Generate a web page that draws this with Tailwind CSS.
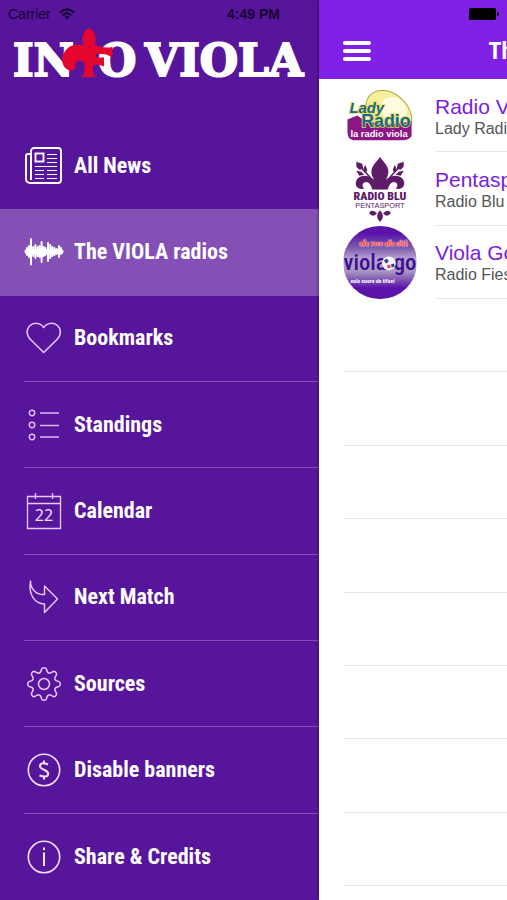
<!DOCTYPE html>
<html lang="en">

<head>
    <meta charset="UTF-8">
    <meta name="viewport" content="width=device-width, initial-scale=1.0">
    <title>Info Viola</title>
    <script src="https://cdn.jsdelivr.net/npm/@tailwindcss/browser@4"></script>
</head>

<body class="bg-[#57159c] font-['Liberation_Sans',sans-serif]">
<div class="relative flex min-h-screen w-full overflow-hidden">

    <!-- Status bar, stays over the menu and the page -->
    <div class="absolute inset-x-0 top-0 z-20 grid grid-cols-3 items-center px-2 pt-1 text-[#150330]">
        <div class="flex items-center gap-2 text-sm">
            Carrier
            <svg class="h-3 w-4" viewBox="0 0 16 12" fill="none" stroke="currentColor" stroke-width="2">
                <path d="M1 4.5Q8-1.8 15 4.5M3.8 7.2Q8 3.2 12.2 7.2" />
                <path d="M5.6 8.8Q8 6.8 10.4 8.8L8 11.5Z" fill="currentColor" stroke="none" />
            </svg>
        </div>
        <div class="text-center text-sm font-bold">4:49 PM</div>
        <svg class="h-3 w-[30px] justify-self-end" viewBox="0 0 30 12" fill="#000">
            <rect x="0" y="0" width="27" height="12" rx="1.5" />
            <path d="M28 4q2 0 2 2t-2 2z" />
        </svg>
    </div>

    <!-- Side menu -->
    <aside class="flex w-[319px] shrink-0 flex-col text-white">
        <header class="h-[123px] pt-7">
            <svg class="ml-3 h-[54px] w-[296px] overflow-visible" viewBox="0 0 296 54" fill="#fff" stroke="#fff" stroke-width="2" font-family="DejaVu Serif, serif" font-weight="700" font-size="44" role="img" aria-label="Info Viola">
                <text x="1" y="48">IN</text>
                <text x="86" y="48">O</text>
                <text x="133" y="48">VIOLA</text>
                <g fill="#e4062e" stroke="none">
                    <path d="M77 0C71 3 69 10 71.500 17H82.500C85 10 83 3 77 0Z" />
                    <path d="M72 17.500C62 14 51 20 50.300 31C50 38 54 42.500 60 42.500Q63 42 63.500 39C62 33 69 30 72.500 35V44Q72 47 69 49H85Q81 47 81 44V37Q87 36 92 38.500V29.500H84V26H90Q96 26 100.500 30V19Q92 21 82 16.500Z" />
                </g>
            </svg>
        </header>

        <nav class="grid flex-1 auto-rows-fr font-['Liberation_Sans_Narrow','Roboto_Condensed','Liberation_Sans',sans-serif] text-[22px] leading-6 font-bold">
            <a href="#" class="flex items-center gap-[10px] pl-6">
                <svg class="size-10" viewBox="0 0 40 40" fill="none" stroke="#fff" stroke-width="1.900">
                    <path d="M7 33V5a3 3 0 0 1 3-3h24a3 3 0 0 1 3 3v29a3 3 0 0 1-3 3H6a4 4 0 0 1-4-4V10a2 2 0 0 1 2-2h3" />
                    <path d="M7 10V34" />
                    <rect x="11.500" y="7.500" width="8" height="8" />
                    <path d="M23 8.500h10M23 12.500h10M23 16.500h10M11 20.500h22M11 24.500h9M23 24.500h10M11 28.500h9M23 28.500h10M11 32.500h9M23 32.500h10" stroke-width="1" />
                </svg>
                All News
            </a>
            <a href="#" aria-current="page" class="flex items-center gap-[10px] bg-[#8450b5] pl-6">
                <svg class="size-10" viewBox="0 0 40 40" fill="none" stroke="#fff" stroke-width="2" stroke-linecap="round">
                    <path d="M3 16v7M5 14v11M7 7v25.500M9.200 15v9M11.400 13v13M13.600 15v9M15.600 14v11M17.600 10v20M19.500 15v9M21.400 16v7M24 11v18M26.200 13v13M28.300 15v9M30.400 16v7M32.500 17v5M35 14v11M37 16v6" />
                    <path d="M3 19.500h34" stroke-width="5" />
                </svg>
                The VIOLA radios
            </a>
            <a href="#" class="ml-6 flex items-center gap-[10px] border-b border-white/25">
                <svg class="size-10" viewBox="0 0 40 40" fill="none" stroke="#e9c9ff" stroke-width="1.500" stroke-linejoin="round">
                    <path d="M19.700 34.500L6.500 21.500C2 17 2.500 11 5.500 8C9.500 4 16.500 4.500 19.700 9.500C23 4.500 30 4 34 8C37 11 37.500 17 33 21.500Z" />
                </svg>
                Bookmarks
            </a>
            <a href="#" class="ml-6 flex items-center gap-[10px] border-b border-white/25">
                <svg class="size-10" viewBox="0 0 40 40" fill="none" stroke="#dcb8f5" stroke-width="1.500">
                    <circle cx="8" cy="8" r="2.700" />
                    <circle cx="8" cy="20" r="2.700" />
                    <circle cx="8" cy="32" r="2.700" />
                    <path d="M16 8h19M16 20.500h19M16 32h19" />
                </svg>
                Standings
            </a>
            <a href="#" class="ml-6 flex items-center gap-[10px] border-b border-white/25">
                <svg class="size-10" viewBox="0 0 40 40" fill="none" stroke="#e9c9ff" stroke-width="1.300">
                    <path d="M3.500 5.500h33v32h-33zM3.500 12.500h33M11.500 2v6M28.500 2v6" />
                    <text x="20" y="30" text-anchor="middle" font-family="Open Sans, sans-serif" font-weight="400" font-size="16" fill="#f3e2ff" stroke="none">22</text>
                </svg>
                Calendar
            </a>
            <a href="#" class="ml-6 flex items-center gap-[10px] border-b border-white/25">
                <svg class="size-10" viewBox="0 0 40 40" fill="none" stroke="#e9c9ff" stroke-width="1.400" stroke-linejoin="round">
                    <path d="M6.500 4C6.500 12 12 18 20.500 17.500V9L33.500 22L20.500 35.500V27C11 26.500 4 18 6.500 4Z" />
                </svg>
                Next Match
            </a>
            <a href="#" class="ml-6 flex items-center gap-[10px] border-b border-white/25">
                <svg class="size-10" viewBox="-20 -20 40 40" fill="none" stroke="#e9c9ff" stroke-width="1.500">
                    <path id="cog" d="M-2.400-15Q-2-16.200 0-16.200Q2-16.200 2.400-15Q3-11.500 4.600-11.100Q6-10.300 8.900-12.300Q10.300-13.200 11.700-11.700Q13.200-10.300 12.300-8.900Q10.300-6 11.100-4.600Q11.500-3 15-2.400" />
                    <use href="#cog" transform="rotate(90)" />
                    <use href="#cog" transform="rotate(180)" />
                    <use href="#cog" transform="rotate(270)" />
                    <circle r="5.500" />
                </svg>
                Sources
            </a>
            <a href="#" class="ml-6 flex items-center gap-[10px] border-b border-white/25">
                <svg class="size-10" viewBox="0 0 40 40" fill="none" stroke="#f3e2ff" stroke-width="1.600">
                    <circle cx="20" cy="20" r="15.700" />
                    <path d="M24 14.500Q16 11.500 16 16.300C16 20 24.200 19.500 24.200 23.700Q24 28.200 15.500 25.500M20 10.500V13.500M20 26.500V29.500" stroke-width="2" />
                </svg>
                Disable banners
            </a>
            <a href="#" class="ml-6 flex items-center gap-[10px]">
                <svg class="size-10" viewBox="0 0 40 40" fill="none" stroke="#f3e2ff" stroke-width="1.600">
                    <circle cx="20" cy="20" r="15.700" />
                    <path d="M20 15.500V29M20 10.500V13" stroke-width="2" />
                </svg>
                Share &amp; Credits
            </a>
        </nav>
    </aside>

    <!-- Page pushed to the right by the menu -->
    <main class="flex w-screen shrink-0 flex-col bg-white shadow-[0_0_3px_#00000099]">
        <header class="grid h-[79px] grid-cols-[1fr_auto_1fr] items-center bg-[#7f20e4] px-6 pt-[22px] text-white">
            <button type="button" aria-label="Menu" class="flex w-7 flex-col gap-1">
                <span class="h-1 rounded-sm bg-white"></span>
                <span class="h-1 rounded-sm bg-white"></span>
                <span class="h-1 rounded-sm bg-white"></span>
            </button>
            <h1 class="font-['Liberation_Sans_Narrow','Roboto_Condensed','Liberation_Sans',sans-serif] text-2xl font-bold">The VIOLA radios</h1>
        </header>

        <ul class="grid flex-1 auto-rows-fr pb-[14px] pl-6">
            <li class="flex gap-[18px]">
                <svg class="h-[73px] w-[74px] shrink-0" viewBox="0 0 74 74" font-family="Liberation Sans, sans-serif" font-weight="700">
                    <ellipse cx="46" cy="34" rx="26" ry="19" transform="rotate(42 46 34)" fill="#f5ee9c" stroke="#b9a545" />
                    <ellipse cx="51" cy="31" rx="14" ry="12" transform="rotate(42 51 31)" fill="#fffbe0" />
                    <path d="M4 41L14 37Q28 50 69 43V58Q66 62 60 62H10Q4 61 4 54Z" fill="#8b1684" />
                    <g fill="#156a96" stroke="#f0dc4a" stroke-width="1.500" paint-order="stroke">
                        <text x="6" y="34" font-size="15" font-style="italic">Lady</text>
                        <text x="18" y="49" font-size="18">Radio</text>
                    </g>
                    <text x="7" y="59" font-size="9.500" fill="#fff">la radio viola</text>
                </svg>
                <div class="flex flex-1 flex-col justify-center border-b border-gray-200 pt-[3px] whitespace-nowrap">
                    <p class="text-[21px] leading-6 text-[#7a22e0]">Radio Viola</p>
                    <p class="text-base leading-5 text-[#555]">Lady Radio</p>
                </div>
            </li>
            <li class="flex gap-[18px]">
                <svg class="h-[73px] w-[74px] shrink-0" viewBox="0 0 74 74" fill="#5d1b68" font-family="Roboto Condensed, Roboto, sans-serif" font-weight="900" text-anchor="middle">
                    <path d="M37 5C41 11 49 16 44 26L40 38H34L30 26C25 16 33 11 37 5Z" />
                    <path d="M35 38C33 24 20 21 14 27C10 33 14 39 21 37C17 33 21 29 25 31Q28 33 29 38H45Q46 33 49 31C53 29 57 33 53 37C60 39 64 33 60 27C54 21 41 24 39 38Z" />
                    <path d="M30 29L16 14M44 29L58 14" stroke="#5d1b68" stroke-width="1.500" />
                    <path d="M13 10l6 2 1 5-4 1-3-3zM61 10l-6 2-1 5 4 1 3-3zM22 13l2 5-1 3-3-3zM52 13l-2 5 1 3 3-3zM13 19l5 1 3 3-5 1zM61 19l-5 1-3 3 5 1z" />
                    <text x="37" y="49" font-size="12">RADIO BLU</text>
                    <text x="37" y="57" font-family="Liberation Sans, sans-serif" font-size="7.500" font-weight="400">PENTASPORT</text>
                    <path d="M37 59Q43 65 37 71Q31 65 37 59ZM34 62Q28 57 26 62Q30 67 34 62ZM40 62Q46 57 48 62Q44 67 40 62Z" />
                </svg>
                <div class="flex flex-1 flex-col justify-center border-b border-gray-200 pt-[3px] whitespace-nowrap">
                    <p class="text-[21px] leading-6 text-[#7a22e0]">Pentasport</p>
                    <p class="text-base leading-5 text-[#555]">Radio Blu</p>
                </div>
            </li>
            <li class="flex gap-[18px]">
                <svg class="h-[73px] w-[74px] shrink-0 rounded-full" viewBox="0 0 74 74" font-family="Roboto Condensed, Roboto, sans-serif">
                    <defs>
                        <linearGradient id="sky" x2="0" y2="1">
                            <stop offset="0.100" stop-color="#5a12a8" />
                            <stop offset="0.300" stop-color="#7d5cae" />
                            <stop offset="0.450" stop-color="#b6a3cf" />
                            <stop offset="0.620" stop-color="#a898c0" />
                            <stop offset="0.850" stop-color="#5a12a8" />
                        </linearGradient>
                    </defs>
                    <rect width="74" height="74" fill="url(#sky)" />
                    <text x="16" y="20" font-size="7" font-weight="700" font-style="italic" fill="#f23a3a" stroke="#ffffff" stroke-width="0.500" paint-order="stroke">alla voce alla città</text>
                    <g font-size="23" font-weight="500" fill="#3d0d94">
                        <text x="0" y="45">viola</text>
                        <text x="51" y="45">gol</text>
                    </g>
                    <circle cx="46" cy="38" r="7" fill="#f4f1f8" />
                    <path d="M41 35l3-2 2 3-3 2zM48 39l3-1 1 3-3 1z" fill="#38448c" />
                    <path d="M44 40l3-1 1 3-3 1z" fill="#d44b4b" />
                    <text x="7" y="58" font-size="6" font-weight="700" font-style="italic" fill="#fff">solo cuore da tifosi</text>
                </svg>
                <div class="flex flex-1 flex-col justify-center border-b border-gray-200 pt-[3px] whitespace-nowrap">
                    <p class="text-[21px] leading-6 text-[#7a22e0]">Viola Gol</p>
                    <p class="text-base leading-5 text-[#555]">Radio Fiesole</p>
                </div>
            </li>
            <!-- Empty rows -->
            <li class="border-b border-gray-200"></li>
            <li class="border-b border-gray-200"></li>
            <li class="border-b border-gray-200"></li>
            <li class="border-b border-gray-200"></li>
            <li class="border-b border-gray-200"></li>
            <li class="border-b border-gray-200"></li>
            <li class="border-b border-gray-200"></li>
            <li class="border-b border-gray-200"></li>
        </ul>
    </main>

</div>
</body>

</html>
